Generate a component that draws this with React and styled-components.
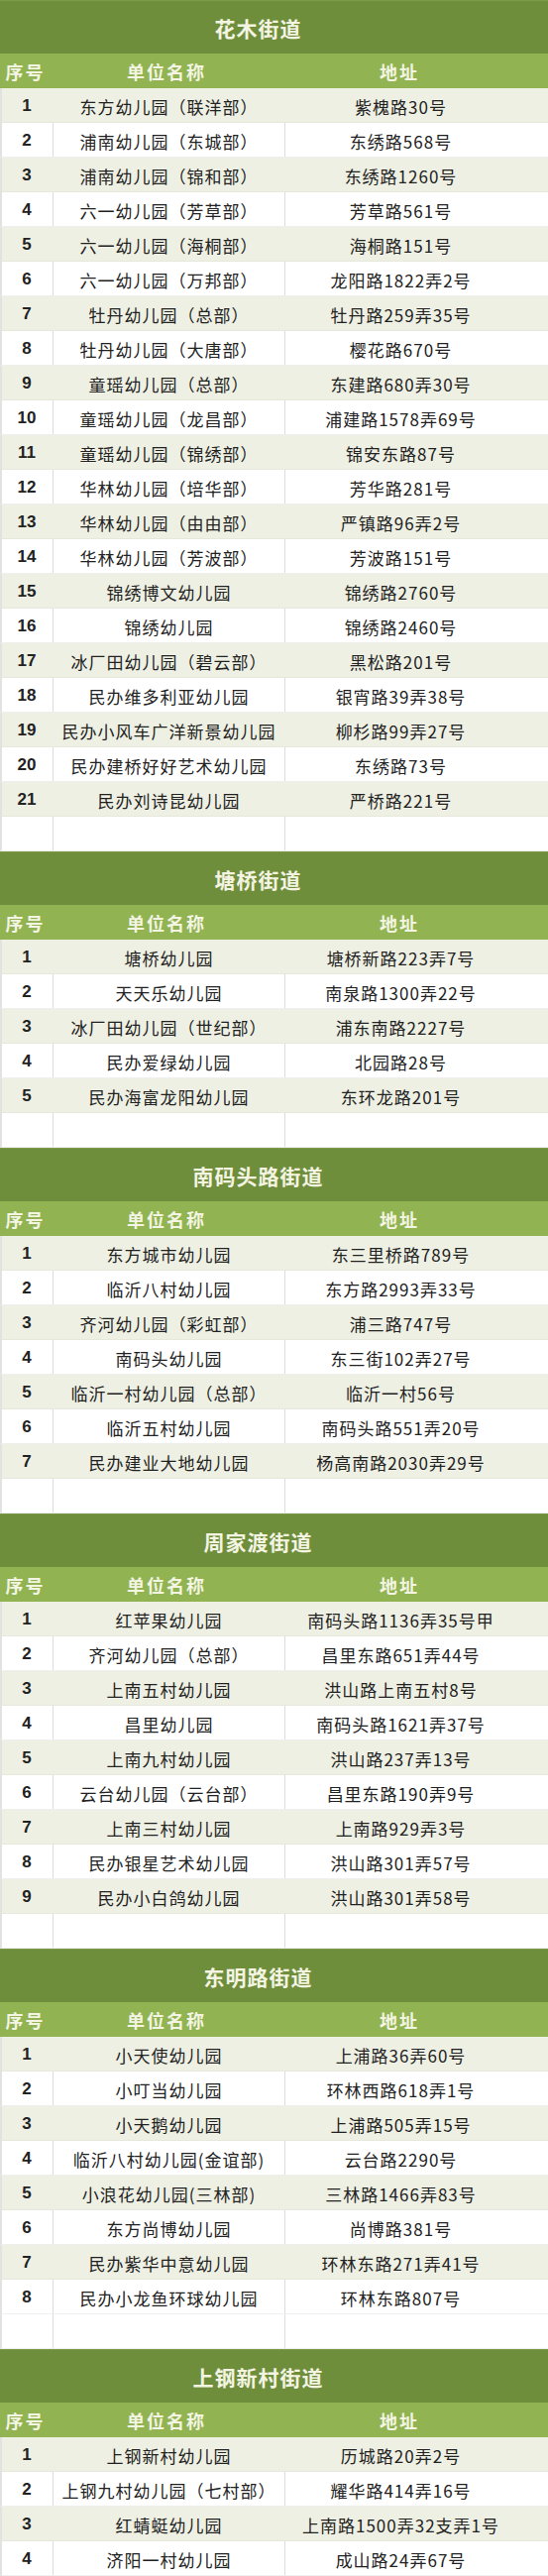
import styled, { createGlobalStyle } from "styled-components";

const GlobalStyle = createGlobalStyle`
  body {
    margin: 0;
    background: #ffffff;
    font-family: "Noto Sans CJK SC", "Noto Sans", sans-serif;
  }
`;

const data = [
  {
    title: "花木街道",
    rows: [
      ["东方幼儿园（联洋部）", "紫槐路30号"],
      ["浦南幼儿园（东城部）", "东绣路568号"],
      ["浦南幼儿园（锦和部）", "东绣路1260号"],
      ["六一幼儿园（芳草部）", "芳草路561号"],
      ["六一幼儿园（海桐部）", "海桐路151号"],
      ["六一幼儿园（万邦部）", "龙阳路1822弄2号"],
      ["牡丹幼儿园（总部）", "牡丹路259弄35号"],
      ["牡丹幼儿园（大唐部）", "樱花路670号"],
      ["童瑶幼儿园（总部）", "东建路680弄30号"],
      ["童瑶幼儿园（龙昌部）", "浦建路1578弄69号"],
      ["童瑶幼儿园（锦绣部）", "锦安东路87号"],
      ["华林幼儿园（培华部）", "芳华路281号"],
      ["华林幼儿园（由由部）", "严镇路96弄2号"],
      ["华林幼儿园（芳波部）", "芳波路151号"],
      ["锦绣博文幼儿园", "锦绣路2760号"],
      ["锦绣幼儿园", "锦绣路2460号"],
      ["冰厂田幼儿园（碧云部）", "黑松路201号"],
      ["民办维多利亚幼儿园", "银宵路39弄38号"],
      ["民办小风车广洋新景幼儿园", "柳杉路99弄27号"],
      ["民办建桥好好艺术幼儿园", "东绣路73号"],
      ["民办刘诗昆幼儿园", "严桥路221号"],
    ],
  },
  {
    title: "塘桥街道",
    rows: [
      ["塘桥幼儿园", "塘桥新路223弄7号"],
      ["天天乐幼儿园", "南泉路1300弄22号"],
      ["冰厂田幼儿园（世纪部）", "浦东南路2227号"],
      ["民办爱绿幼儿园", "北园路28号"],
      ["民办海富龙阳幼儿园", "东环龙路201号"],
    ],
  },
  {
    title: "南码头路街道",
    rows: [
      ["东方城市幼儿园", "东三里桥路789号"],
      ["临沂八村幼儿园", "东方路2993弄33号"],
      ["齐河幼儿园（彩虹部）", "浦三路747号"],
      ["南码头幼儿园", "东三街102弄27号"],
      ["临沂一村幼儿园（总部）", "临沂一村56号"],
      ["临沂五村幼儿园", "南码头路551弄20号"],
      ["民办建业大地幼儿园", "杨高南路2030弄29号"],
    ],
  },
  {
    title: "周家渡街道",
    rows: [
      ["红苹果幼儿园", "南码头路1136弄35号甲"],
      ["齐河幼儿园（总部）", "昌里东路651弄44号"],
      ["上南五村幼儿园", "洪山路上南五村8号"],
      ["昌里幼儿园", "南码头路1621弄37号"],
      ["上南九村幼儿园", "洪山路237弄13号"],
      ["云台幼儿园（云台部）", "昌里东路190弄9号"],
      ["上南三村幼儿园", "上南路929弄3号"],
      ["民办银星艺术幼儿园", "洪山路301弄57号"],
      ["民办小白鸽幼儿园", "洪山路301弄58号"],
    ],
  },
  {
    title: "东明路街道",
    rows: [
      ["小天使幼儿园", "上浦路36弄60号"],
      ["小叮当幼儿园", "环林西路618弄1号"],
      ["小天鹅幼儿园", "上浦路505弄15号"],
      ["临沂八村幼儿园(金谊部)", "云台路2290号"],
      ["小浪花幼儿园(三林部)", "三林路1466弄83号"],
      ["东方尚博幼儿园", "尚博路381号"],
      ["民办紫华中意幼儿园", "环林东路271弄41号"],
      ["民办小龙鱼环球幼儿园", "环林东路807号"],
    ],
  },
  {
    title: "上钢新村街道",
    last: true,
    rows: [
      ["上钢新村幼儿园", "历城路20弄2号"],
      ["上钢九村幼儿园（七村部）", "耀华路414弄16号"],
      ["红蜻蜓幼儿园", "上南路1500弄32支弄1号"],
      ["济阳一村幼儿园", "成山路24弄67号"],
    ],
  },
];

const Page = styled.div`
  width: 553px;
  display: flex;
  flex-direction: column;
`;

const Section = styled.section`
  display: flex;
  flex-direction: column;
`;

const TitleBar = styled.div`
  height: 54px;
  background: #6f8e3b;
  border-top: 1px solid #7e9b4a;
  box-sizing: border-box;
  padding-right: 32px;
  display: flex;
  align-items: center;
  justify-content: center;
  color: #f4f4e2;
  font-size: 21px;
  font-weight: 700;
  letter-spacing: 1px;
`;

const HeaderRow = styled.div`
  height: 35px;
  background: #91b352;
  display: grid;
  grid-template-columns: 51px 234px 1fr;
  padding-right: 32px;
  align-items: center;
  color: #f3f5e2;
  font-size: 18px;
  font-weight: 700;
  letter-spacing: 2px;
`;

const HeadCell = styled.div`
  text-align: center;
`;

const Row = styled.div`
  height: 35px;
  box-sizing: border-box;
  display: grid;
  grid-template-columns: 51px 234px 1fr;
  padding-right: 32px;
  align-items: center;
  background: ${(p) => (p.$shade ? "#eef0e3" : "#ffffff")};
  border-left: 2px solid #e2e2e0;
  border-bottom: 1px solid ${(p) => (p.$shade ? "#e6e8dc" : "#efefef")};
  color: #222;
  font-size: 17px;
  letter-spacing: 1px;
`;

const Cell = styled.div`
  height: 100%;
  display: flex;
  align-items: center;
  justify-content: center;
  white-space: nowrap;
  padding-top: 2px;
  box-sizing: border-box;
  border-left: 1px solid ${(p) => (p.$line ? "#dcdcdc" : "transparent")};
`;

const NumCell = styled(Cell)`
  font-family: "Liberation Sans", Arial, sans-serif;
  font-weight: 700;
  font-size: 17px;
  letter-spacing: 0;
  margin-left: -2px;
`;

function Table({ title, rows, last }) {
  const list = last ? rows : [...rows, ["", ""]];
  return (
    <Section>
      <TitleBar>{title}</TitleBar>
      <HeaderRow>
        <HeadCell>序号</HeadCell>
        <HeadCell>单位名称</HeadCell>
        <HeadCell>地址</HeadCell>
      </HeaderRow>
      {list.map((r, i) => {
        const shade = i % 2 === 0 && r[0] !== "";
        return (
          <Row key={i} $shade={shade}>
            <NumCell>{r[0] ? i + 1 : ""}</NumCell>
            <Cell $line={!shade}>{r[0]}</Cell>
            <Cell $line={!shade}>{r[1]}</Cell>
          </Row>
        );
      })}
    </Section>
  );
}

export default function App() {
  return (
    <>
      <GlobalStyle />
      <Page>
        {data.map((s) => (
          <Table key={s.title} {...s} />
        ))}
      </Page>
    </>
  );
}
